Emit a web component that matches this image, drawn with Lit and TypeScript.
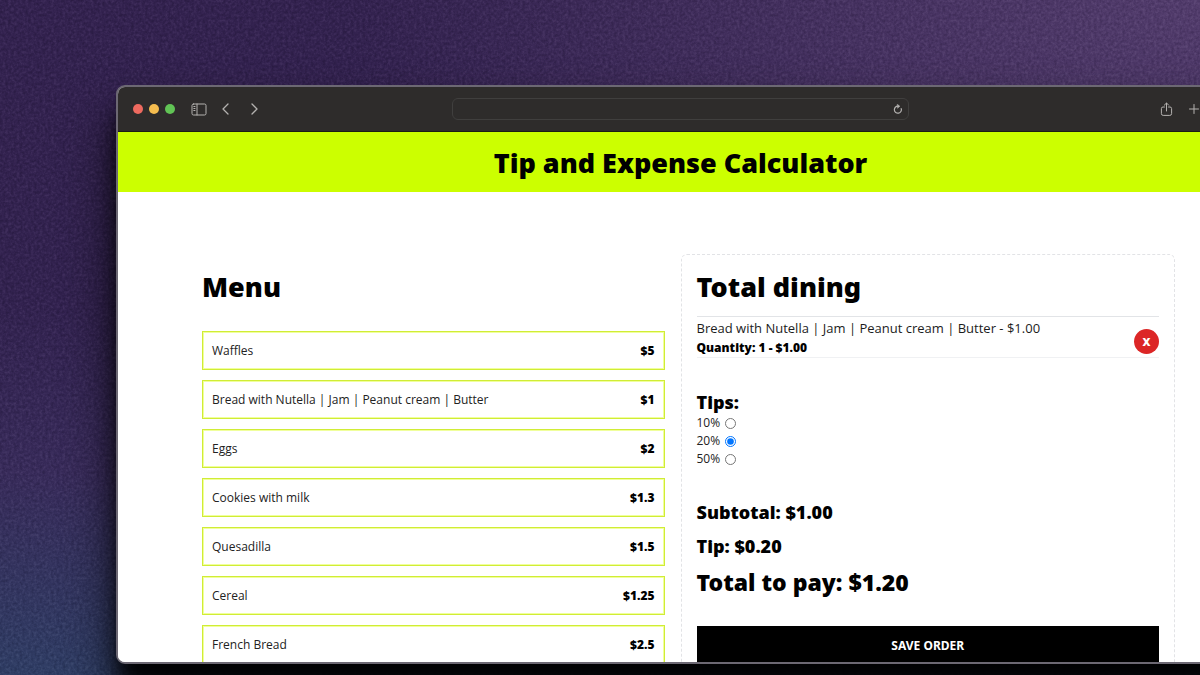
import { LitElement, html, css } from "lit";
import { customElement, state } from "lit/decorators.js";

interface Item {
  id: number;
  name: string;
  price: number;
}

interface OrderItem extends Item {
  quantity: number;
}

const MENU: Item[] = [
  { id: 1, name: "Waffles", price: 5 },
  { id: 2, name: "Bread with Nutella | Jam | Peanut cream | Butter", price: 1 },
  { id: 3, name: "Eggs", price: 2 },
  { id: 4, name: "Cookies with milk", price: 1.3 },
  { id: 5, name: "Quesadilla", price: 1.5 },
  { id: 6, name: "Cereal", price: 1.25 },
  { id: 7, name: "French Bread", price: 2.5 },
];

const TIPS = [
  { id: "tip-10", value: 0.1, label: "10%" },
  { id: "tip-20", value: 0.2, label: "20%" },
  { id: "tip-50", value: 0.5, label: "50%" },
];

const money = (n: number) => `$${n.toFixed(2)}`;

@customElement("browser-toolbar")
export class BrowserToolbar extends LitElement {
  static styles = css`
    :host {
      display: grid;
      grid-template-columns: 1fr 457px 1fr;
      align-items: center;
      height: 44px;
      padding: 0 15px;
      background: #2e2c2b;
      border-bottom: 1px solid #1b1c16;
    }
    .left,
    .right {
      display: flex;
      align-items: center;
    }
    .right {
      justify-content: flex-end;
      gap: 15px;
      padding-right: 28px;
    }
    .lights {
      display: flex;
      gap: 6px;
      margin-right: 16px;
    }
    .light {
      width: 10px;
      height: 10px;
      border-radius: 50%;
    }
    .close {
      background: #ee6a5f;
    }
    .minimise {
      background: #f5bd4f;
    }
    .zoom {
      background: #61c455;
    }
    button {
      display: flex;
      padding: 0;
      border: 0;
      background: none;
      color: #b4b2b0;
    }
    .back {
      margin: 0 16px 0 13px;
    }
    .address {
      display: flex;
      align-items: center;
      height: 20px;
      padding: 0 5px 0 8px;
      border: 1px solid #403f3e;
      border-radius: 6px;
    }
    input {
      flex: 1;
      min-width: 0;
      padding: 0;
      border: 0;
      outline: 0;
      background: none;
      color: #dddddd;
      font: 12px "Open Sans", sans-serif;
    }
    svg {
      display: block;
      fill: none;
      stroke: currentColor;
      stroke-linecap: round;
      stroke-linejoin: round;
    }
  `;

  render() {
    return html`
      <div class="left">
        <div class="lights">
          <span class="light close"></span>
          <span class="light minimise"></span>
          <span class="light zoom"></span>
        </div>
        <button aria-label="Sidebar">
          <svg width="16" height="13" viewBox="0 0 16 13">
            <rect x="1" y="1" width="14" height="11" rx="1.5" />
            <path d="M6 1v11M2.8 3.5h1.2M2.8 5.5h1.2M2.8 7.5h1.2" />
          </svg>
        </button>
        <button class="back" aria-label="Back">
          <svg width="12" height="14" viewBox="0 0 12 14" stroke-width="1.3">
            <path d="M8 2 3 7l5 5" />
          </svg>
        </button>
        <button aria-label="Forward">
          <svg width="12" height="14" viewBox="0 0 12 14" stroke-width="1.3">
            <path d="m4 2 5 5-5 5" />
          </svg>
        </button>
      </div>
      <div class="address">
        <input type="text" aria-label="Address" />
        <button aria-label="Reload">
          <svg width="10" height="10" viewBox="0 0 10 10" stroke-width="1.2">
            <path d="M8.2 4.6A3.5 3.5 0 1 1 5 2.2" />
            <path d="M4.6.5 6.8 2.2 4.8 4Z" fill="currentColor" stroke-width=".6" />
          </svg>
        </button>
      </div>
      <div class="right">
        <button aria-label="Share">
          <svg width="13" height="15" viewBox="0 0 13 15">
            <path d="M4.5 5H3a1.6 1.6 0 0 0-1.6 1.6v5A1.8 1.8 0 0 0 3.2 13.4h6.6a1.8 1.8 0 0 0 1.8-1.8v-5A1.6 1.6 0 0 0 10 5H8.5M6.5 9V1.2M4.3 3.200l2.200-2.200 2.200 2.200" />
          </svg>
        </button>
        <button aria-label="New tab">
          <svg width="12" height="12" viewBox="0 0 12 12">
            <path d="M6 1.5v9M1.5 6h9" />
          </svg>
        </button>
      </div>
    `;
  }
}

@customElement("tip-calculator")
export class TipCalculator extends LitElement {
  @state() private order: OrderItem[] = [{ ...MENU[1], quantity: 1 }];
  @state() private tip = 0.2;

  static styles = css`
    :host {
      display: block;
      background: #ffffff;
      color: #000000;
      font-family: "Noto Sans", "Open Sans", sans-serif;
      font-size: 12px;
    }
    h1,
    h2,
    h3,
    p,
    ul {
      margin: 0;
      padding: 0;
      font-weight: 900;
    }
    ul {
      list-style: none;
    }
    .banner {
      padding: 13px 0 11px;
      background: #ccff00;
      text-align: center;
    }
    h1,
    h2 {
      font-size: 27px;
      line-height: 36px;
    }
    .columns {
      display: grid;
      grid-template-columns: 1fr 1fr;
      max-width: 989px;
      margin: 62px auto 0;
    }
    .menu {
      padding: 15px 16px;
    }
    .items {
      display: grid;
      gap: 10px;
      margin-top: 26px;
    }
    .item {
      display: flex;
      justify-content: space-between;
      align-items: center;
      width: 100%;
      height: 39px;
      padding: 0 9px;
      border: 1px solid #d0ec36;
      box-shadow: inset 0 0 0 1px #f0ff9c;
      background: #ffffff;
      color: #222222;
      font: 12px "Open Sans", sans-serif;
    }
    .item:hover {
      background: #ccff00;
    }
    .price {
      color: #000000;
      font-family: "Noto Sans", sans-serif;
      font-weight: 900;
    }
    .total {
      padding: 14px 15px;
      border: 1px dashed #e2e3e6;
      border-radius: 6px;
    }
    .order {
      margin-top: 11px;
    }
    .line {
      display: flex;
      justify-content: space-between;
      align-items: center;
      border-top: 1px solid #e2e4e7;
    }
    .line:last-child {
      border-bottom: 1px solid #f0f1f3;
    }
    .name {
      color: #1c1c1c;
      font-family: "Open Sans", sans-serif;
      font-size: 13px;
      font-weight: 400;
      line-height: 22px;
    }
    .quantity {
      line-height: 18px;
    }
    .remove {
      width: 25px;
      height: 25px;
      margin-top: 8px;
      padding: 0;
      border: 0;
      border-radius: 50%;
      background: #dc2626;
      color: #ffffff;
      font: inherit;
      font-size: 11px;
      font-weight: 900;
    }
    h3 {
      font-size: 18px;
      line-height: 24px;
    }
    fieldset {
      margin: 32px 0 0;
      padding: 0;
      border: 0;
    }
    legend {
      padding: 0;
    }
    .tip {
      display: flex;
      align-items: center;
      gap: 5px;
      color: #222222;
      font-family: "Open Sans", sans-serif;
      line-height: 18px;
    }
    .tip input {
      width: 11px;
      height: 11px;
      margin: 0;
    }
    .sums {
      display: grid;
      gap: 10px;
      margin-top: 32px;
    }
    .sums .grand {
      font-size: 23px;
      line-height: 28px;
    }
    .save {
      width: 100%;
      height: 38px;
      margin-top: 30px;
      border: 0;
      background: #000000;
      color: #ffffff;
      font: inherit;
      font-weight: 700;
      text-transform: uppercase;
    }
  `;

  private add(item: Item) {
    const found = this.order.some((o) => o.id === item.id);
    this.order = found
      ? this.order.map((o) => (o.id === item.id ? { ...o, quantity: o.quantity + 1 } : o))
      : [...this.order, { ...item, quantity: 1 }];
  }

  private remove(id: number) {
    this.order = this.order.filter((o) => o.id !== id);
  }

  render() {
    const subtotal = this.order.reduce((sum, o) => sum + o.price * o.quantity, 0);
    const tip = subtotal * this.tip;
    return html`
      <header class="banner"><h1>Tip and Expense Calculator</h1></header>
      <main class="columns">
        <section class="menu">
          <h2>Menu</h2>
          <div class="items">
            ${MENU.map(
              (item) => html`
                <button class="item" @click=${() => this.add(item)}>
                  <span>${item.name}</span><span class="price">$${item.price}</span>
                </button>
              `
            )}
          </div>
        </section>
        <section class="total">
          <h2>Total dining</h2>
          <ul class="order">
            ${this.order.map(
              (o) => html`
                <li class="line">
                  <div>
                    <p class="name">${o.name} - ${money(o.price)}</p>
                    <p class="quantity">Quantity: ${o.quantity} - ${money(o.price * o.quantity)}</p>
                  </div>
                  <button class="remove" @click=${() => this.remove(o.id)}>X</button>
                </li>
              `
            )}
          </ul>
          <fieldset>
            <legend><h3>Tips:</h3></legend>
            ${TIPS.map(
              (t) => html`
                <div class="tip">
                  <label for=${t.id}>${t.label}</label>
                  <input
                    id=${t.id}
                    type="radio"
                    name="tip"
                    .checked=${this.tip === t.value}
                    @change=${() => (this.tip = t.value)}
                  />
                </div>
              `
            )}
          </fieldset>
          <div class="sums">
            <h3>Subtotal: ${money(subtotal)}</h3>
            <h3>Tip: ${money(tip)}</h3>
            <h3 class="grand">Total to pay: ${money(subtotal + tip)}</h3>
          </div>
          <button class="save">Save order</button>
        </section>
      </main>
    `;
  }
}

@customElement("app-root")
export class AppRoot extends LitElement {
  static styles = css`
    :host {
      display: grid;
      position: relative;
      isolation: isolate;
      box-sizing: border-box;
      height: 100vh;
      padding: 85px 0 11px 116px;
      overflow: hidden;
      background:
        radial-gradient(ellipse at 100% 0, #523c6c 0, transparent 50%),
        linear-gradient(180deg, #33224f 0, #32224f 45%, #382b5a 70%, #2f3d64 100%);
    }
    .grain {
      position: absolute;
      inset: 0;
      z-index: -1;
      width: 100%;
      height: 100%;
      opacity: 0.2;
      mix-blend-mode: soft-light;
    }
    .window {
      display: grid;
      grid-template-rows: auto 1fr;
      min-height: 0;
      margin-right: -45px;
      border: 2px solid #6c6873;
      border-radius: 9px;
      overflow: hidden;
      background: #ffffff;
      box-shadow:
        0 32px 50px rgba(0, 0, 0, 0.8),
        0 24px 20px -4px rgba(0, 0, 0, 0.9);
    }
    .page {
      min-height: 0;
      overflow: hidden;
    }
  `;

  render() {
    return html`
      <svg class="grain" aria-hidden="true">
        <filter id="noise" color-interpolation-filters="sRGB">
          <feTurbulence type="fractalNoise" baseFrequency="0.35" numOctaves="3" seed="4" />
          <feColorMatrix type="matrix" values="1.6 0 0 0 -.3  1.6 0 0 0 -.3  1.6 0 0 0 -.3  0 0 0 0 1" />
        </filter>
        <rect width="100%" height="100%" filter="url(#noise)" />
      </svg>
      <div class="window">
        <browser-toolbar></browser-toolbar>
        <div class="page"><tip-calculator></tip-calculator></div>
      </div>
    `;
  }
}
